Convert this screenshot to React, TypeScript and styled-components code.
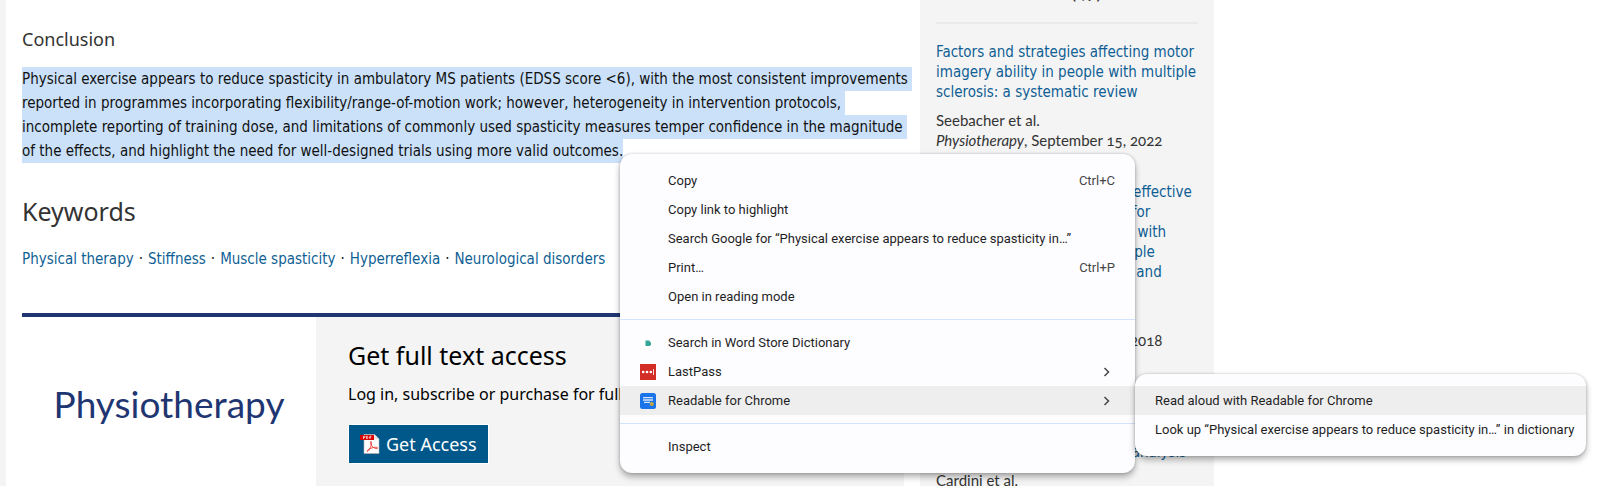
import React from "react";
import styled, { createGlobalStyle, css } from "styled-components";

const GlobalStyle = createGlobalStyle`
  *, *::before, *::after { box-sizing: border-box; }
  body { margin: 0; background: #fff; }
`;

const reading = `"DejaVu Sans Condensed", "Noto Sans", sans-serif`;
const display = `"Noto Sans", "Open Sans", sans-serif`;
const citation = `Lato, "Open Sans", sans-serif`;
const blue = "#0f5f94";

const Page = styled.div`
  height: 100vh;
  overflow: hidden;
  padding-left: 6px;
  background: linear-gradient(to right, #f4f4f4 6px, #fff 6px);
  font-family: ${reading};
  font-size: 15px;
  color: #111;
`;

const Columns = styled.div`
  display: grid;
  grid-template-columns: minmax(0, 898px) minmax(0, 294px);
  column-gap: 16px;
  min-height: 100%;
`;

const Article = styled.main`
  padding: 25px 0 0 16px;
`;

const Heading3 = styled.h3`
  margin: 0 0 14px;
  font-family: ${display};
  font-size: 18px;
  line-height: 28px;
  font-weight: 400;
  color: #333;
`;

const Abstract = styled.p`
  margin: 0;
  line-height: 24px;
`;

const SelectedLine = styled.span`
  display: block;
  width: fit-content;
  padding-right: 4px;
  background: #cae1f9;
  white-space: nowrap;
  &:last-child { padding-right: 0; }
`;

const Heading2 = styled.h2`
  margin: 32px 0 20px;
  font-family: ${display};
  font-size: 25px;
  line-height: 32px;
  font-weight: 400;
  color: #333;
`;

const Keywords = styled.ul`
  display: flex;
  margin: 0;
  padding: 0;
  list-style: none;
  line-height: 24px;
`;

const Keyword = styled.li`
  white-space: nowrap;
  &:not(:last-child)::after {
    content: "·";
    margin: 0 5px;
  }
`;

const Link = styled.a`
  color: ${blue};
  text-decoration: none;
`;

const Access = styled.section`
  display: grid;
  grid-template-columns: 294px 1fr;
  margin-top: 42px;
  border-top: 4px solid #1f3672;
  background: #f4f4f4;
`;

const Brand = styled.div`
  display: flex;
  justify-content: center;
  align-items: center;
  height: 172px;
  background: #fff;
  font-family: Lato, sans-serif;
  font-size: 37px;
  color: #1f3672;
`;

const AccessBody = styled.div`
  padding: 22px 32px;
  font-family: ${display};
  color: #000;
`;

const AccessTitle = styled.h2`
  margin: 0 0 9px;
  font-size: 25px;
  line-height: 32px;
  font-weight: 400;
`;

const AccessText = styled.p`
  margin: 0 0 16px;
  font-size: 16px;
  line-height: 28px;
  white-space: nowrap;
`;

const AccessButton = styled.button`
  display: inline-flex;
  align-items: center;
  gap: 6px;
  height: 40px;
  padding: 0 11px;
  border: 1px solid #fff;
  background: #00578a;
  color: #fff;
  font-family: inherit;
  font-size: 18px;
`;

const Aside = styled.aside`
  padding: 0 16px;
  background: #f4f4f4;
  line-height: 20px;
  color: #333;
`;

const AsideTitle = styled.h2`
  height: 24px;
  margin: 0 0 18px;
  display: flex;
  flex-direction: column;
  justify-content: flex-end;
  padding-bottom: 18px;
  border-bottom: 2px solid #eaeaea;
  font-family: ${citation};
  font-variant-numeric: oldstyle-nums;
  font-size: 19px;
  line-height: 24px;
  font-weight: 400;
`;

const Related = styled.article`
  margin-bottom: 32px;
  white-space: nowrap;
`;

const RelatedTitle = styled.div`
  margin-bottom: 8px;
`;

const Citation = styled.div`
  font-family: ${citation};
  font-variant-numeric: oldstyle-nums;
`;

const Line = styled.span`
  display: block;
`;

const menuFace = css`
  position: absolute;
  padding: 12px 0;
  border-radius: 12px;
  background: #fdfdff;
  box-shadow: 0 4px 6px rgba(0, 0, 0, 0.3), 0 0 3px rgba(0, 0, 0, 0.2);
  font-family: Roboto, sans-serif;
  font-size: 13px;
  color: #1f1f1f;
`;

const Menu = styled.div`
  ${menuFace}
  left: 620px;
  top: 154px;
  width: 515px;
`;

const SubMenu = styled.div`
  ${menuFace}
  left: 1135px;
  top: 374px;
  width: 451px;
`;

const MenuItem = styled.button<{ $active?: boolean }>`
  display: flex;
  align-items: center;
  width: 100%;
  height: 29px;
  padding: 0 20px;
  border: 0;
  background: ${(p) => (p.$active ? "#eeeeef" : "transparent")};
  color: inherit;
  font: inherit;
  text-align: left;
  white-space: nowrap;
`;

const IconSlot = styled.span`
  display: flex;
  width: 28px;
`;

const Shortcut = styled.span`
  margin-left: auto;
  color: #474747;
`;

const Chevron = styled.svg`
  margin-left: auto;
`;

const Separator = styled.hr`
  height: 1px;
  margin: 8px 0;
  border: 0;
  background: #d3e3fd;
`;

const PdfIcon = () => (
  <svg width="20" height="20" viewBox="0 0 20 20" aria-hidden="true">
    <path d="M4 0.500h10.500l4.500 4.500v14.500H4z" fill="#fff" stroke="#b9b1ad" strokeWidth="0.600" />
    <path d="M14.500 0.500v4.500h4.500z" fill="#e4e0de" />
    <rect x="0" y="1" width="14" height="5" fill="#d80000" />
    <path d="M3.500 5V2.200h1.200q.8.8 0 1.400H3.500M6.500 2.200v2.500h.8q1-1.200 0-2.500zM9.800 5V2.200h1.700M9.800 3.600h1.400" fill="none" stroke="#fff" strokeWidth="0.700" />
    <path d="M10.800 7.500c-1 .3.500 5.500 4 6.700 1.600.6 3 .4 2.800-.3-.3-.9-3.500-.8-6 .1-2.600.9-4.800 2.500-4.500 3.300.4.800 2.300-1.300 3.400-4 .9-2.200 1.400-6.100.3-5.800z" fill="none" stroke="#e8372c" strokeWidth="0.900" />
  </svg>
);

const WordStoreIcon = () => (
  <svg width="16" height="16" viewBox="0 0 16 16" aria-hidden="true">
    <circle cx="8" cy="8" r="7.500" fill="#fff" />
    <path d="M5.500 5.500h3.500l2 2v2.500l-1.500 1h-4z" fill="#35a696" />
  </svg>
);

const LastPassIcon = () => (
  <svg width="16" height="16" viewBox="0 0 16 16" aria-hidden="true">
    <rect width="16" height="16" fill="#d32d27" />
    <g fill="#fff">
      <circle cx="3.200" cy="8" r="1.300" />
      <circle cx="7" cy="8" r="1.300" />
      <circle cx="10.800" cy="8" r="1.300" />
      <rect x="13" y="5" width="0.800" height="6" />
    </g>
  </svg>
);

const ReadableIcon = () => (
  <svg width="16" height="16" viewBox="0 0 16 16" aria-hidden="true">
    <rect width="16" height="16" rx="2.500" fill="#1a73e8" />
    <path d="M3 4.700h10M3 7h10M4 9.300h6" stroke="#d5e5fb" strokeWidth="1.300" />
    <circle cx="11.800" cy="11" r="2" fill="#c9a83a" />
  </svg>
);

const ArrowIcon = () => (
  <Chevron width="16" height="16" viewBox="0 0 16 16" aria-hidden="true">
    <path d="M5.500 4l4 4-4 4" fill="none" stroke="#474747" strokeWidth="1.500" />
  </Chevron>
);

const selected = [
  "Physical exercise appears to reduce spasticity in ambulatory MS patients (EDSS score <6), with the most consistent improvements",
  "reported in programmes incorporating flexibility/range-of-motion work; however, heterogeneity in intervention protocols,",
  "incomplete reporting of training dose, and limitations of commonly used spasticity measures temper confidence in the magnitude",
  "of the effects, and highlight the need for well-designed trials using more valid outcomes.",
];

const keywords = ["Physical therapy", "Stiffness", "Muscle spasticity", "Hyperreflexia", "Neurological disorders"];

const related = [
  {
    title: ["Factors and strategies affecting motor", "imagery ability in people with multiple", "sclerosis: a systematic review"],
    authors: ["Seebacher et al."],
    date: "September 15, 2022",
  },
  {
    title: [
      "Exercise treatments that are effective",
      "for improving balance levels for",
      "patients who were now living with",
      "this condition known as multiple",
      "sclerosis: systematic reviews and",
    ],
    authors: ["Harrison et al.", "on behalf of the group"],
    date: "September 11, 2018",
  },
  {
    title: ["Effects of exercise training", "on fatigue and walking in", "people with sclerosis: a", "systematic review and meta analysis"],
    authors: ["Cardini et al."],
    date: "March 10, 2021",
  },
];

export default function App() {
  return (
    <Page>
      <GlobalStyle />
      <Columns>
        <Article>
          <Heading3>Conclusion</Heading3>
          <Abstract>
            {selected.map((line) => (
              <SelectedLine key={line}>{line}</SelectedLine>
            ))}
          </Abstract>
          <Heading2>Keywords</Heading2>
          <Keywords>
            {keywords.map((word) => (
              <Keyword key={word}>
                <Link href="#">{word}</Link>
              </Keyword>
            ))}
          </Keywords>
          <Access>
            <Brand>Physiotherapy</Brand>
            <AccessBody>
              <AccessTitle>Get full text access</AccessTitle>
              <AccessText>Log in, subscribe or purchase for full access.</AccessText>
              <AccessButton type="button">
                <PdfIcon />
                Get Access
              </AccessButton>
            </AccessBody>
          </Access>
        </Article>
        <Aside>
          <AsideTitle>
            <span>Related Articles (47)</span>
          </AsideTitle>
          {related.map((item) => (
            <Related key={item.date}>
              <RelatedTitle>
                <Link href="#">
                  {item.title.map((line) => (
                    <Line key={line}>{line}</Line>
                  ))}
                </Link>
              </RelatedTitle>
              <Citation>
                {item.authors.map((line) => (
                  <Line key={line}>{line}</Line>
                ))}
                <em>Physiotherapy</em>, {item.date}
              </Citation>
            </Related>
          ))}
        </Aside>
      </Columns>
      <Menu role="menu">
        <MenuItem role="menuitem"><IconSlot />Copy<Shortcut>Ctrl+C</Shortcut></MenuItem>
        <MenuItem role="menuitem"><IconSlot />Copy link to highlight</MenuItem>
        <MenuItem role="menuitem"><IconSlot />Search Google for “Physical exercise appears to reduce spasticity in…”</MenuItem>
        <MenuItem role="menuitem"><IconSlot />Print…<Shortcut>Ctrl+P</Shortcut></MenuItem>
        <MenuItem role="menuitem"><IconSlot />Open in reading mode</MenuItem>
        <Separator />
        <MenuItem role="menuitem"><IconSlot><WordStoreIcon /></IconSlot>Search in Word Store Dictionary</MenuItem>
        <MenuItem role="menuitem"><IconSlot><LastPassIcon /></IconSlot>LastPass<ArrowIcon /></MenuItem>
        <MenuItem role="menuitem" $active><IconSlot><ReadableIcon /></IconSlot>Readable for Chrome<ArrowIcon /></MenuItem>
        <Separator />
        <MenuItem role="menuitem"><IconSlot />Inspect</MenuItem>
      </Menu>
      <SubMenu role="menu">
        <MenuItem role="menuitem" $active>Read aloud with Readable for Chrome</MenuItem>
        <MenuItem role="menuitem">Look up “Physical exercise appears to reduce spasticity in…” in dictionary</MenuItem>
      </SubMenu>
    </Page>
  );
}
